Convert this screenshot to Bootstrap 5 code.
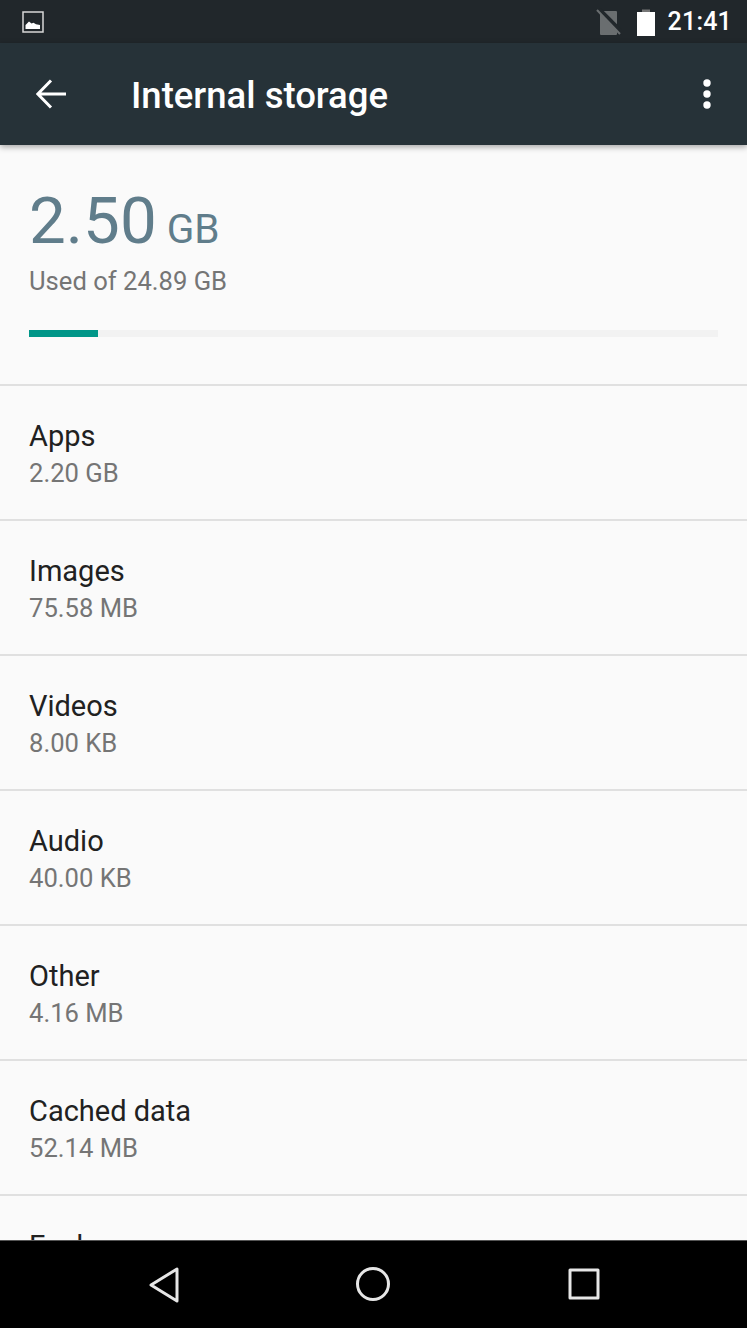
<!DOCTYPE html>
<html lang="en">
<head>
    <meta charset="UTF-8">
    <meta name="viewport" content="width=device-width, initial-scale=1.0">
    <title>Internal storage</title>
    <link href="https://cdn.jsdelivr.net/npm/bootstrap@5.3.0/dist/css/bootstrap.min.css" rel="stylesheet">
    <style>
        html, body { height: 100%; }
        body {
            font-family: Roboto, "Liberation Sans", sans-serif;
            background-color: #fafafa;
            overflow: hidden;
        }
        .phone { height: 1328px; }
        .status-strip {
            height: 43px;
            background-color: #21272b;
            color: #fff;
            padding: 0 15px 0 22px;
            flex: none;
        }
        .status-time { font-size: 25px; font-weight: 500; line-height: 1; letter-spacing: .2px; margin-left: 13px; }
        .battery-icon { margin-left: 15px; }
        .app-bar {
            height: 102px;
            background-color: #263238;
            box-shadow: 0 2px 6px rgba(0, 0, 0, .35);
            padding: 0 34px 0 36px;
            flex: none;
            position: relative;
            z-index: 2;
        }
        .app-title { font-size: 36.5px; font-weight: 500; color: #fff; margin: 4px 0 0 65px; line-height: 1; }
        .content-area { overflow: hidden; min-height: 0; }
        .summary { height: 241px; padding: 43px 29px 0; border-bottom: 2px solid #e0e0e0; }
        .used-value { color: #607d8b; font-size: 65.5px; line-height: 66px; }
        .used-unit { color: #607d8b; font-size: 40.5px; margin-left: 10px; }
        .used-of { color: #757575; font-size: 25.6px; line-height: 30px; margin-top: 6px; }
        .used-track { height: 7px; margin-top: 34px; background-color: #f2f2f2; border-radius: 0; }
        .used-track .progress-bar { background-color: #009688; }
        .store-row {
            height: 135px;
            padding: 34px 29px 0;
            border-bottom: 2px solid #e0e0e0;
            background: transparent;
        }
        .store-name { color: #212121; font-size: 29px; line-height: 32px; }
        .store-size { color: #757575; font-size: 25.6px; line-height: 30px; margin-top: 6px; }
        .nav-strip {
            height: 88px;
            background-color: #000;
            border-top: 1px solid #555;
            margin-top: -1px;
            flex: none;
            position: relative;
            z-index: 2;
        }
        .nav-strip svg { position: absolute; top: 25px; }
    </style>
</head>
<body>
    <div class="phone d-flex flex-column">
        <div class="status-strip d-flex align-items-center">
            <svg width="22" height="22" viewBox="0 0 22 22">
                <rect x="1" y="1" width="20" height="20" fill="none" stroke="#d8d8d8" stroke-width="1.5"/>
                <path d="M3.500 18v-4l3.500-3.500 2.500 2 2-.8 2.500 1.500 4 .8V18z" fill="#fff"/>
            </svg>
            <div class="ms-auto d-flex align-items-center">
                <svg width="26" height="28" viewBox="0 0 26 28">
                    <path d="M5 4h15v22H5z" fill="#6a6e70" stroke="#6a6e70" stroke-linejoin="round" stroke-width="2"/>
                    <path d="M3 1l24 24" stroke="#21272b" stroke-width="4"/>
                    <path d="M1 2l23 24" stroke="#6a6e70" stroke-width="2"/>
                </svg>
                <svg class="battery-icon" width="18" height="28" viewBox="0 0 18 28">
                    <path d="M5 1.500h8V4H5z" fill="#777"/>
                    <path d="M0 4h18v24H0z" fill="#fff"/>
                </svg>
                <span class="status-time">21:41</span>
            </div>
        </div>

        <div class="app-bar d-flex align-items-center">
            <svg width="30" height="30" viewBox="0 0 30 30" fill="none" stroke="#fff" stroke-width="3">
                <path d="M30 15H3M15 1.500 1.800 15 15 28.500"/>
            </svg>
            <h1 class="app-title">Internal storage</h1>
            <svg class="ms-auto" width="12" height="30" viewBox="0 0 12 30" fill="#fff">
                <circle cx="6" cy="4" r="3.700"/>
                <circle cx="6" cy="15" r="3.700"/>
                <circle cx="6" cy="26" r="3.700"/>
            </svg>
        </div>

        <div class="content-area flex-grow-1">
            <div class="summary">
                <div><span class="used-value">2.50</span><span class="used-unit">GB</span></div>
                <div class="used-of">Used of 24.89 GB</div>
                <div class="progress used-track">
                    <div class="progress-bar" style="width: 10%"></div>
                </div>
            </div>
            <div class="store-row"><div class="store-name">Apps</div><div class="store-size">2.20 GB</div></div>
            <div class="store-row"><div class="store-name">Images</div><div class="store-size">75.58 MB</div></div>
            <div class="store-row"><div class="store-name">Videos</div><div class="store-size">8.00 KB</div></div>
            <div class="store-row"><div class="store-name">Audio</div><div class="store-size">40.00 KB</div></div>
            <div class="store-row"><div class="store-name">Other</div><div class="store-size">4.16 MB</div></div>
            <div class="store-row"><div class="store-name">Cached data</div><div class="store-size">52.14 MB</div></div>
            <div class="store-row"><div class="store-name">Explore</div></div>
        </div>

        <div class="nav-strip">
            <svg style="left: 146px" width="36" height="38" viewBox="0 0 36 38" fill="none" stroke="#e6e6e6" stroke-width="3" stroke-linejoin="round">
                <path d="M31 3v32L5 19z"/>
            </svg>
            <svg style="left: 355px" width="36" height="36" viewBox="0 0 36 36" fill="none" stroke="#e6e6e6" stroke-width="3">
                <circle cx="18" cy="18" r="15.500"/>
            </svg>
            <svg style="left: 566px" width="36" height="36" viewBox="0 0 36 36" fill="none" stroke="#e6e6e6" stroke-width="3" stroke-linejoin="round">
                <rect x="4" y="4" width="28" height="28"/>
            </svg>
        </div>
    </div>

    <script src="https://cdn.jsdelivr.net/npm/bootstrap@5.3.0/dist/js/bootstrap.bundle.min.js"></script>
</body>
</html>
